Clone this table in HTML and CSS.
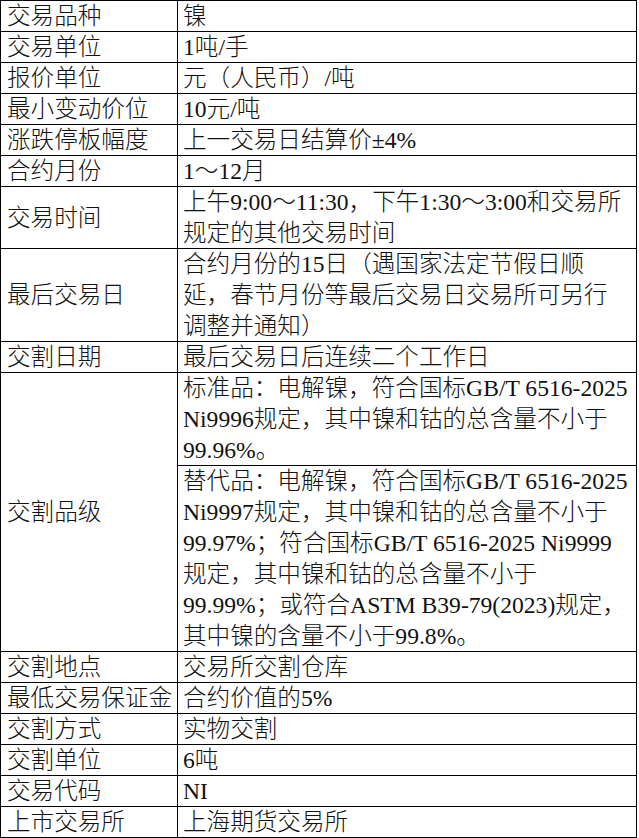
FILE: index.html
```html
<!DOCTYPE html>
<html lang="zh-CN">
<head>
<meta charset="utf-8">
<title>镍期货合约</title>
<link rel="stylesheet" href="styles.css">
</head>
<body>
<table class="spec">
  <tr><td class="k"><div class="t">交易品种</div></td><td class="v"><div class="t">镍</div></td></tr>
  <tr><td class="k"><div class="t">交易单位</div></td><td class="v"><div class="t">1吨/手</div></td></tr>
  <tr><td class="k"><div class="t">报价单位</div></td><td class="v"><div class="t">元（人民币）/吨</div></td></tr>
  <tr><td class="k"><div class="t">最小变动价位</div></td><td class="v"><div class="t">10元/吨</div></td></tr>
  <tr><td class="k"><div class="t">涨跌停板幅度</div></td><td class="v"><div class="t">上一交易日结算价±4%</div></td></tr>
  <tr><td class="k"><div class="t">合约月份</div></td><td class="v"><div class="t">1～12月</div></td></tr>
  <tr><td class="k"><div class="t">交易时间</div></td><td class="v"><div class="t">上午9:00～11:30，下午1:30～3:00和交易所<br>规定的其他交易时间</div></td></tr>
  <tr><td class="k"><div class="t">最后交易日</div></td><td class="v"><div class="t">合约月份的15日（遇国家法定节假日顺<br>延，春节月份等最后交易日交易所可另行<br>调整并通知）</div></td></tr>
  <tr><td class="k"><div class="t">交割日期</div></td><td class="v"><div class="t">最后交易日后连续二个工作日</div></td></tr>
  <tr><td class="k" rowspan="2"><div class="t">交割品级</div></td><td class="v"><div class="t">标准品：电解镍，符合国标GB/T 6516-2025<br>Ni9996规定，其中镍和钴的总含量不小于<br>99.96%。</div></td></tr>
  <tr><td class="v"><div class="t">替代品：电解镍，符合国标GB/T 6516-2025<br>Ni9997规定，其中镍和钴的总含量不小于<br>99.97%；符合国标GB/T 6516-2025 Ni9999<br>规定，其中镍和钴的总含量不小于<br>99.99%；或符合ASTM B39-79(2023)规定，<br>其中镍的含量不小于99.8%。</div></td></tr>
  <tr><td class="k"><div class="t">交割地点</div></td><td class="v"><div class="t">交易所交割仓库</div></td></tr>
  <tr><td class="k"><div class="t">最低交易保证金</div></td><td class="v"><div class="t">合约价值的5%</div></td></tr>
  <tr><td class="k"><div class="t">交割方式</div></td><td class="v"><div class="t">实物交割</div></td></tr>
  <tr><td class="k"><div class="t">交割单位</div></td><td class="v"><div class="t">6吨</div></td></tr>
  <tr><td class="k"><div class="t">交易代码</div></td><td class="v"><div class="t">NI</div></td></tr>
  <tr><td class="k"><div class="t">上市交易所</div></td><td class="v"><div class="t">上海期货交易所</div></td></tr>
</table>
</body>
</html>
```
FILE: styles.css
```css
html, body {
  margin: 0;
  padding: 0;
  background: #ffffff;
}

.spec {
  border-collapse: collapse;
  table-layout: fixed;
  width: 637px;
  font-family: "Liberation Serif", "Noto Sans CJK SC", serif;
  font-size: 23.6px;
  font-weight: 300;
  color: #111111;
}

.spec td {
  border: 1px solid #000000;
  padding: 0;
  white-space: nowrap;
}

.spec .k {
  width: 170px;
  padding-left: 6px;
  vertical-align: middle;
  overflow: hidden;
}

.spec .v {
  padding-left: 5px;
  vertical-align: top;
}

.spec .t {
  line-height: 31px;
  margin-bottom: -1px;
}
```
